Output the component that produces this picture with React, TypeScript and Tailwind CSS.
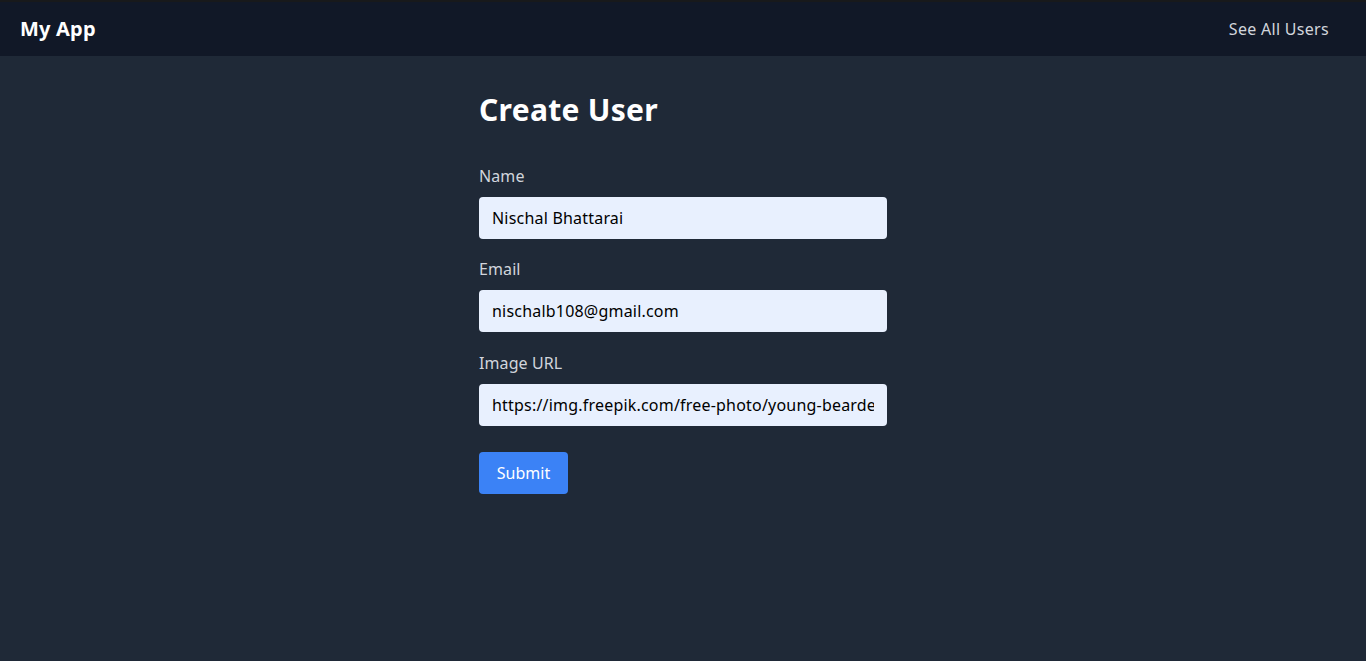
import React from "react";

const font = { fontFamily: '"Noto Sans", "Open Sans", sans-serif' };

function Field({
  label,
  value,
  type = "text",
  gap = "mb-[18px]",
}: {
  label: string;
  value: string;
  type?: string;
  gap?: string;
}) {
  return (
    <div className={gap}>
      <label className="block text-base leading-6 text-gray-300 mb-[9px] tracking-[0.1px]">{label}</label>
      <input
        type={type}
        defaultValue={value}
        className="block w-full h-[42px] px-[13px] rounded bg-[#e8f0fe] text-black text-base tracking-[0.2px] outline-none border-0"
        style={font}
      />
    </div>
  );
}

export default function App() {
  return (
    <div className="min-h-[661px] bg-[#1f2937] flex flex-col" style={font}>
      <nav className="h-[56px] bg-[#111827] border-t-2 border-[#18191b] flex items-center justify-between pl-5 pr-[37px]">
        <span className="text-xl font-bold text-white tracking-[0.2px]">My App</span>
        <a className="text-base text-gray-300 tracking-[0.3px]">See All Users</a>
      </nav>
      <main className="w-[408px] mx-auto pt-9">
        <h1 className="text-3xl leading-9 font-bold text-white mb-9 tracking-[0.3px]">Create User</h1>
        <form onSubmit={(e) => e.preventDefault()}>
          <Field label="Name" value="Nischal Bhattarai" gap="mb-[18px]" />
          <Field label="Email" value="nischalb108@gmail.com" type="email" gap="mb-[19px]" />
          <Field
            label="Image URL"
            value="https://img.freepik.com/free-photo/young-bearded-man-with-striped-shirt_273609-5677.jpg"
            gap="mb-[18px]"
          />
          <button
            type="submit"
            className="mt-2 h-[42px] w-[89px] rounded bg-[#3b82f6] text-white text-base"
          >
            Submit
          </button>
        </form>
      </main>
    </div>
  );
}
